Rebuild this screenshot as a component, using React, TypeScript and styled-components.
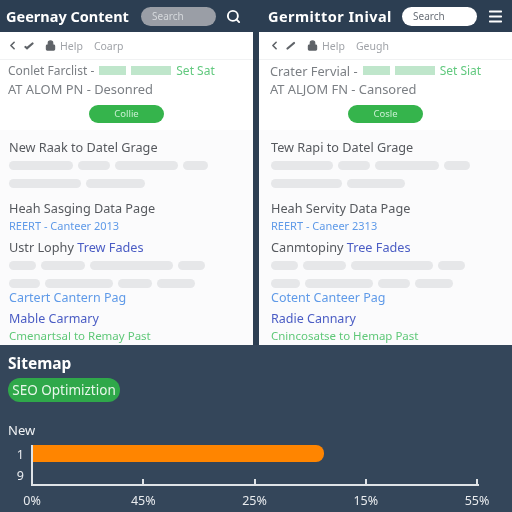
import styled, { createGlobalStyle } from "styled-components";
import { ChevronLeft, Lock, Search, Menu } from "lucide-react";

type Tone = "plain" | "sky" | "indigo" | "green";

const tones: Record<Tone, string> = {
  plain: "#56595e",
  sky: "#5f9ae8",
  indigo: "#4a5cc4",
  green: "#5fc878",
};

type Column = {
  title: string;
  searchLight: boolean;
  nav: string;
  line1: string;
  line1Size: number;
  tag: string;
  line2: string;
  button: string;
  head1: string;
  head2: string;
  meta: string;
  head3: string;
  head3Link: string;
  link1: string;
  link2: string;
  foot: string;
  bars: number[][];
};

const columns: Column[] = [
  {
    title: "Geernay Content",
    searchLight: false,
    nav: "Coarp",
    line1: "Conlet Farclist -",
    line1Size: 12,
    tag: "Set Sat",
    line2: "AT ALOM PN - Desonred",
    button: "Collie",
    head1: "New Raak to Datel Grage",
    head2: "Heah Sasging Data Page",
    meta: "REERT - Canteer 2013",
    head3: "Ustr Lophy",
    head3Link: "Trew Fades",
    link1: "Cartert Cantern Pag",
    link2: "Mable Carmary",
    foot: "Cmenartsal to Remay Past",
    bars: [
      [64, 32, 63, 25],
      [72, 59],
      [27, 44, 83, 27],
      [31, 68, 34, 38],
    ],
  },
  {
    title: "Germittor Inival",
    searchLight: true,
    nav: "Geugh",
    line1: "Crater Fervial -",
    line1Size: 12.8,
    tag: "Set Siat",
    line2: "AT ALJOM FN - Cansored",
    button: "Cosle",
    head1: "Tew Rapi to Datel Grage",
    head2: "Heah Servity Data Page",
    meta: "REERT - Caneer 2313",
    head3: "Canmtopiny",
    head3Link: "Tree Fades",
    link1: "Cotent Canteer Pag",
    link2: "Radie Cannary",
    foot: "Cnincosatse to Hemap Past",
    bars: [
      [62, 32, 64, 26],
      [71, 58],
      [27, 43, 82, 27],
      [29, 68, 32, 38],
    ],
  },
];

const ticks = ["0%", "45%", "25%", "15%", "55%"];

const BarRows = ({ rows }: { rows: number[][] }) => (
  <BarStack>
    {rows.map((row, i) => (
      <BarRow key={i}>
        {row.map((w, j) => (
          <Bar key={j} style={{ width: w }} />
        ))}
      </BarRow>
    ))}
  </BarStack>
);

const App = () => {
  return (
    <Page>
      <Global />
      <Top>
        {columns.map((c, i) => (
          <Col key={c.title}>
            <Header $right={i === 1}>
              <Title $right={i === 1}>{c.title}</Title>
              <SearchPill $light={c.searchLight}>Search</SearchPill>
              <HeaderIcon>
                {i === 0 ? <Search size={15} strokeWidth={3} /> : <Menu size={17} strokeWidth={2.6} />}
              </HeaderIcon>
            </Header>
            <Panel>
              <Nav $right={i === 1}>
                <ChevronLeft size={13} strokeWidth={3} />
                <svg width="11" height="11" viewBox="0 0 11 11" fill="none" stroke="currentColor" strokeWidth="2.2" strokeLinecap="round">
                  <path d={i === 0 ? "M2.5 7l1.5 1.2L9.5 3.5" : "M2.5 8.5L9 3"} />
                </svg>
                <NavLock>
                  <Lock size={11} strokeWidth={2.5} fill="currentColor" />
                </NavLock>
                <NavLink>Help</NavLink>
                <NavLink>{c.nav}</NavLink>
              </Nav>
              <Intro>
                <IntroLine $right={i === 1} $size={c.line1Size}>
                  {c.line1}
                  <GreenBlock $w={27} />
                  <GreenBlock $w={40} />
                  <Tag>{c.tag}</Tag>
                </IntroLine>
                <IntroLine $right={i === 1} $size={12.9}>{c.line2}</IntroLine>
                <ButtonRow>
                  <GreenButton>{c.button}</GreenButton>
                </ButtonRow>
              </Intro>
              <Body $right={i === 1}>
                <Heading>{c.head1}</Heading>
                <BarRows rows={c.bars.slice(0, 2)} />
                <Heading $top={12}>{c.head2}</Heading>
                <Meta>{c.meta}</Meta>
                <Heading $top={6}>
                  {c.head3} <Inline $tone="indigo">{c.head3Link}</Inline>
                </Heading>
                <BarRows rows={c.bars.slice(2)} />
                <Line $tone="sky" $size={12.5} $top={1}>{c.link1}</Line>
                <Line $tone="indigo" $size={12.5} $top={4}>{c.link2}</Line>
                <Line $tone="green" $size={11.5} $top={0}>{c.foot}</Line>
              </Body>
            </Panel>
          </Col>
        ))}
      </Top>
      <Bottom>
        <SectionTitle>Sitemap</SectionTitle>
        <SeoPill>SEO Optimiztion</SeoPill>
        <ChartLabel>New</ChartLabel>
        <Chart>
          <YAxis>
            <YLabel>1</YLabel>
            <YLabel>9</YLabel>
          </YAxis>
          <Plot>
            <OrangeBar />
          </Plot>
          <span />
          <Ticks>
            {ticks.map((t) => (
              <Tick key={t}>
                <TickLabel>{t}</TickLabel>
              </Tick>
            ))}
          </Ticks>
        </Chart>
      </Bottom>
    </Page>
  );
};

export default App;

const Global = createGlobalStyle`
  html, body {
    margin: 0;
    padding: 0;
    background: #2c3e52;
  }
  * {
    box-sizing: border-box;
  }
`;

const Page = styled.div`
  width: 512px;
  height: 512px;
  overflow: hidden;
  display: flex;
  flex-direction: column;
  font-family: "Noto Sans", "Open Sans", sans-serif;
  background: #2c3e52;
  filter: blur(0.55px);
`;

const Top = styled.div`
  display: flex;
  justify-content: space-between;
  height: 345px;
`;

const Col = styled.div`
  width: 253px;
  display: flex;
  flex-direction: column;
`;

const Header = styled.div<{ $right: boolean }>`
  height: 32px;
  display: flex;
  align-items: center;
  padding-left: ${(p) => (p.$right ? "9px" : "6px")};
`;

const Title = styled.div<{ $right: boolean }>`
  width: ${(p) => (p.$right ? 134 : 135)}px;
  flex: none;
  font-size: 14.5px;
  font-weight: 700;
  letter-spacing: ${(p) => (p.$right ? "0.45px" : "0")};
  color: #ffffff;
  white-space: nowrap;
`;

const SearchPill = styled.div<{ $light: boolean }>`
  width: 75px;
  height: 19px;
  border-radius: 10px;
  flex: none;
  padding-left: 11px;
  font-size: 10px;
  line-height: 19px;
  color: ${(p) => (p.$light ? "#6a7078" : "#d5d8dc")};
  background: ${(p) => (p.$light ? "#ffffff" : "#9a9ea6")};
`;

const HeaderIcon = styled.div`
  display: flex;
  color: #fff;
  margin-left: 10px;
`;

const Panel = styled.div`
  flex: 1;
  display: flex;
  flex-direction: column;
  background: #ffffff;
`;

const Nav = styled.div<{ $right: boolean }>`
  height: 28px;
  display: flex;
  align-items: center;
  gap: 4px;
  padding-left: ${(p) => (p.$right ? "9px" : "6px")};
  border-bottom: 1px solid #f1f2f3;
  color: #5f6368;
`;

const NavLock = styled.span`
  display: flex;
  margin-left: 7px;
  margin-right: 0;
`;

const NavLink = styled.span`
  font-size: 10.5px;
  color: #a0a3a8;
  margin-right: 7px;
`;

const Intro = styled.div`
  height: 70px;
  padding-top: 2px;
`;

const IntroLine = styled.div<{ $right: boolean; $size: number }>`
  display: flex;
  align-items: center;
  height: 17px;
  margin-bottom: 1px;
  padding-left: ${(p) => (p.$right ? "11px" : "8px")};
  font-size: ${(p) => p.$size}px;
  color: #7b7f84;
  white-space: nowrap;
`;

const GreenBlock = styled.span<{ $w: number }>`
  width: ${(p) => p.$w}px;
  height: 9px;
  margin-left: 5px;
  background: #bfe6cb;
`;

const Tag = styled.span`
  margin-left: 5px;
  color: #62c97f;
  font-size: 12px;
`;

const ButtonRow = styled.div`
  display: flex;
  justify-content: center;
  padding-top: 7px;
`;

const GreenButton = styled.div`
  width: 75px;
  height: 18px;
  border-radius: 9px;
  background: #35b44c;
  color: #c9f0d2;
  font-size: 9.5px;
  line-height: 18px;
  text-align: center;
`;

const Body = styled.div<{ $right: boolean }>`
  flex: 1;
  padding: 9px 0 0 ${(p) => (p.$right ? "12px" : "9px")};
  background: #fbfbfc;
`;

const Heading = styled.div<{ $top?: number }>`
  margin-top: ${(p) => p.$top ?? 0}px;
  height: 17px;
  line-height: 17px;
  font-size: 12.7px;
  color: ${tones.plain};
  white-space: nowrap;
`;

const Inline = styled.span<{ $tone: Tone }>`
  color: ${(p) => tones[p.$tone]};
`;

const Meta = styled.div`
  margin-top: 2px;
  height: 14px;
  line-height: 14px;
  font-size: 11px;
  color: ${tones.sky};
  white-space: nowrap;
`;

const Line = styled.div<{ $tone: Tone; $size: number; $top: number }>`
  margin-top: ${(p) => p.$top}px;
  height: 17px;
  line-height: 17px;
  font-size: ${(p) => p.$size}px;
  color: ${(p) => tones[p.$tone]};
  white-space: nowrap;
`;

const BarStack = styled.div`
  display: flex;
  flex-direction: column;
  gap: 9px;
  margin-top: 5px;
`;

const BarRow = styled.div`
  display: flex;
  gap: 5px;
`;

const Bar = styled.div`
  height: 9px;
  border-radius: 5px;
  background: #e6e7e9;
`;

const Bottom = styled.div`
  flex: 1;
  background: #34465a;
  padding: 8px 0 0 8px;
  display: flex;
  flex-direction: column;
  align-items: flex-start;
`;

const SectionTitle = styled.div`
  font-size: 15.5px;
  line-height: 20px;
  font-weight: 700;
  color: #ffffff;
`;

const SeoPill = styled.div`
  margin-top: 5px;
  width: 112px;
  height: 24px;
  border-radius: 12px;
  background: #2fa84a;
  color: #e8f7ea;
  font-size: 13.5px;
  line-height: 24px;
  text-align: center;
  white-space: nowrap;
`;

const ChartLabel = styled.div`
  margin-top: 19px;
  font-size: 13px;
  line-height: 18px;
  color: #f0f2f4;
`;

const Chart = styled.div`
  margin-top: 6px;
  display: grid;
  grid-template-columns: 23px 448px;
  grid-template-rows: 41px 26px;
`;

const YAxis = styled.div`
  display: flex;
  flex-direction: column;
  padding: 1px 7px 0 0;
  align-items: flex-end;
  gap: 4px;
`;

const YLabel = styled.div`
  font-size: 12.5px;
  line-height: 17px;
  color: #e8ebee;
`;

const Plot = styled.div`
  border-left: 2px solid #dfe3e7;
  border-bottom: 2px solid #dfe3e7;
`;

const OrangeBar = styled.div`
  width: 291px;
  height: 17px;
  background: #ff8500;
  border-radius: 0 8px 8px 0;
`;

const Ticks = styled.div`
  display: flex;
  justify-content: space-between;
  padding-right: 1px;
`;

const Tick = styled.div`
  position: relative;
  width: 2px;
  height: 7px;
  margin-top: -7px;
  background: #dfe3e7;
`;

const TickLabel = styled.div`
  position: absolute;
  top: 15px;
  left: 1px;
  transform: translateX(-50%);
  font-size: 12.5px;
  line-height: 14px;
  color: #e8ebee;
`;
